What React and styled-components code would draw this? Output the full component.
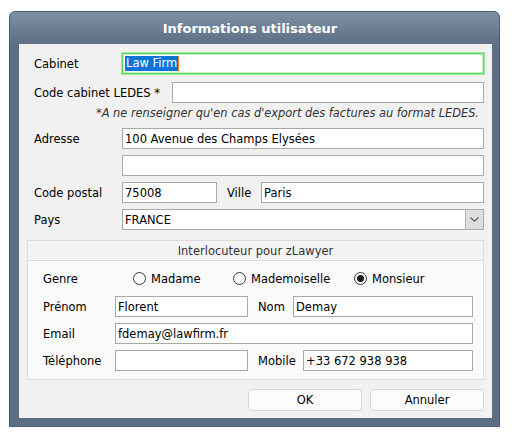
import React from "react";
import styled, { createGlobalStyle } from "styled-components";

const GlobalStyle = createGlobalStyle`
  body {
    margin: 0;
    background: #ffffff;
    font-family: "DejaVu Sans", Verdana, sans-serif;
    font-size: 11.5px;
    color: #000;
  }
`;

const Dialog = styled.div`
  margin: 11px 0 0 9px;
  width: 491px;
  height: 416px;
  box-sizing: border-box;
  border: 1px solid #4d5e71;
  border-radius: 6px 6px 0 0;
  background: #5b6e84;
  display: flex;
  flex-direction: column;
  overflow: hidden;
`;

const TitleBar = styled.div`
  height: 32px;
  flex-shrink: 0;
  padding-right: 9px;
  display: flex;
  align-items: center;
  justify-content: center;
  background: linear-gradient(#7e90a5, #5c6f85);
  color: #fff;
  font-weight: bold;
  font-size: 13px;
`;

const Frame = styled.div`
  padding: 0 7px 8px 9px;
`;

const Panel = styled.div`
  background: #f1f1f1;
  height: 374px;
  box-sizing: border-box;
  padding: 9px 8px 7px 8px;
  display: flex;
  flex-direction: column;
`;

const Row = styled.div`
  display: flex;
  align-items: center;
  height: ${(p) => p.$h || 21}px;
  margin-top: ${(p) => p.$mt || 0}px;
  padding-left: ${(p) => p.$indent || 0}px;
`;

const Label = styled.span`
  flex-shrink: 0;
  width: ${(p) => (p.$w ? `${p.$w}px` : "auto")};
  margin-left: ${(p) => p.$ml || 0}px;
  margin-right: ${(p) => p.$mr || 0}px;
  white-space: nowrap;
`;

const TextBox = styled.input`
  box-sizing: border-box;
  height: 21px;
  border: 1px solid #a9a9a9;
  background: #fff;
  padding: 0 2px;
  margin: 0;
  font: inherit;
  color: #000;
  outline: none;
  min-width: 0;
  width: ${(p) => (p.$w ? `${p.$w}px` : "auto")};
  flex: ${(p) => (p.$w ? "0 0 auto" : "1 1 0")};
`;

const FocusBox = styled.div`
  box-sizing: border-box;
  flex: 1 1 0;
  height: 21px;
  border: 1px solid #5ad65a;
  box-shadow: 0 0 0 1px #9fea9f, inset 0 0 0 1px #c8f4c8;
  background: #fff;
  padding: 0 2px;
  display: flex;
  align-items: center;
`;

const Selected = styled.span`
  background: #0a74d8;
  color: #fff;
  line-height: 15px;
  padding: 0 1px;
`;

const Caret = styled.span`
  width: 1px;
  height: 15px;
  background: #f07c1c;
`;

const Note = styled.div`
  height: 14px;
  line-height: 14px;
  margin-top: 3px;
  padding-right: 5px;
  text-align: right;
  font-style: italic;
  font-size: 11.4px;
  color: #333;
`;

const SelectBox = styled.div`
  box-sizing: border-box;
  flex: 1 1 0;
  height: 21px;
  border: 1px solid #a9a9a9;
  background: #fff;
  display: flex;
  align-items: stretch;
`;

const SelectValue = styled.span`
  flex: 1;
  padding-left: 2px;
  display: flex;
  align-items: center;
`;

const SelectArrow = styled.span`
  width: 17px;
  background: #dedede;
  border-left: 1px solid #b4b4b4;
  display: flex;
  align-items: center;
  justify-content: center;
`;

const Group = styled.div`
  margin-top: 10px;
  border: 1px solid #dcdcdc;
  background: #fafafa;
  padding: 0 10px 8px 15px;
`;

const GroupHeader = styled.div`
  height: 19px;
  margin: 0 -10px 0 -15px;
  border-bottom: 1px solid #dcdcdc;
  background: #f4f4f4;
  color: #333;
  display: flex;
  align-items: center;
  justify-content: center;
`;

const RadioOption = styled.label`
  display: flex;
  align-items: center;
  width: ${(p) => (p.$w ? `${p.$w}px` : "auto")};
  flex-shrink: 0;
`;

const RadioDot = styled.span`
  box-sizing: border-box;
  width: 13px;
  height: 13px;
  border-radius: 50%;
  border: 1px solid #3a3a3a;
  background: #fff;
  margin-right: 5px;
  display: flex;
  align-items: center;
  justify-content: center;

  &::after {
    content: "";
    width: 7px;
    height: 7px;
    border-radius: 50%;
    background: ${(p) => (p.$checked ? "#1e1e1e" : "transparent")};
  }
`;

const ButtonBar = styled.div`
  margin-top: 9px;
  display: flex;
  justify-content: flex-end;
  gap: 8px;
`;

const Button = styled.button`
  width: 114px;
  height: 22px;
  box-sizing: border-box;
  border: 1px solid #d6d6d6;
  border-radius: 4px;
  background: #fcfcfc;
  font: inherit;
  color: #000;
  padding: 0;
`;

const Radio = ({ label, checked, w }) => (
  <RadioOption $w={w}>
    <RadioDot $checked={checked} />
    {label}
  </RadioOption>
);

const App = () => {
  return (
    <>
      <GlobalStyle />
      <Dialog>
        <TitleBar>Informations utilisateur</TitleBar>
        <Frame>
          <Panel>
            <Row $indent={7}>
              <Label $w={88}>Cabinet</Label>
              <FocusBox>
                <Selected>Law Firm</Selected>
                <Caret />
              </FocusBox>
            </Row>
            <Row $indent={7} $mt={8}>
              <Label $mr={12}>Code cabinet LEDES *</Label>
              <TextBox readOnly defaultValue="" />
            </Row>
            <Note>*A ne renseigner qu'en cas d'export des factures au format LEDES.</Note>
            <Row $indent={7} $mt={8}>
              <Label $w={88}>Adresse</Label>
              <TextBox readOnly defaultValue="100 Avenue des Champs Elysées" />
            </Row>
            <Row $indent={95} $mt={6}>
              <TextBox readOnly defaultValue="" />
            </Row>
            <Row $indent={7} $mt={6}>
              <Label $w={88}>Code postal</Label>
              <TextBox readOnly $w={95} defaultValue="75008" />
              <Label $w={34} $ml={10}>Ville</Label>
              <TextBox readOnly defaultValue="Paris" />
            </Row>
            <Row $indent={7} $mt={6}>
              <Label $w={88}>Pays</Label>
              <SelectBox>
                <SelectValue>FRANCE</SelectValue>
                <SelectArrow>
                  <svg width="9" height="5" viewBox="0 0 9 5">
                    <path d="M0.5 0.5 L4.5 4.2 L8.5 0.5" fill="none" stroke="#555" strokeWidth="1.1" />
                  </svg>
                </SelectArrow>
              </SelectBox>
            </Row>

            <Group>
              <GroupHeader>Interlocuteur pour zLawyer</GroupHeader>
              <Row $mt={7}>
                <Label $w={90}>Genre</Label>
                <Radio label="Madame" w={100} />
                <Radio label="Mademoiselle" w={121} />
                <Radio label="Monsieur" checked />
              </Row>
              <Row $mt={7}>
                <Label $w={72}>Prénom</Label>
                <TextBox readOnly $w={133} defaultValue="Florent" />
                <Label $w={35} $ml={10}>Nom</Label>
                <TextBox readOnly defaultValue="Demay" />
              </Row>
              <Row $mt={6}>
                <Label $w={72}>Email</Label>
                <TextBox readOnly defaultValue="fdemay@lawfirm.fr" />
              </Row>
              <Row $mt={6}>
                <Label $w={72}>Téléphone</Label>
                <TextBox readOnly $w={133} defaultValue="" />
                <Label $w={45} $ml={10}>Mobile</Label>
                <TextBox readOnly defaultValue="+33 672 938 938" />
              </Row>
            </Group>

            <ButtonBar>
              <Button>OK</Button>
              <Button>Annuler</Button>
            </ButtonBar>
          </Panel>
        </Frame>
      </Dialog>
    </>
  );
};

export default App;
